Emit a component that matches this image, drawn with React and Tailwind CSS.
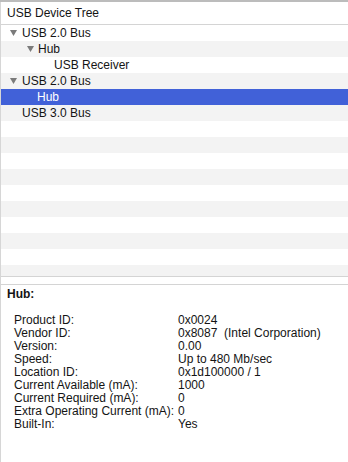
import React from 'react';

const Triangle = ({ className }) => (
  <svg width="7" height="6" viewBox="0 0 7 6" className={className}>
    <path d="M0 0 L7 0 L3.5 6 Z" fill="#7b7b7b" />
  </svg>
);

const treeRows = [
  { label: 'USB 2.0 Bus', pad: 'pl-[9px]', tri: 'mr-[5px]' },
  { label: 'Hub', pad: 'pl-[26px]', tri: 'mr-[4px]' },
  { label: 'USB Receiver', pad: 'pl-[53px]' },
  { label: 'USB 2.0 Bus', pad: 'pl-[9px]', tri: 'mr-[5px]' },
  { label: 'Hub', pad: 'pl-[36px]', selected: true },
  { label: 'USB 3.0 Bus', pad: 'pl-[21px]' },
];

const details = [
  ['Product ID:', '0x0024'],
  ['Vendor ID:', '0x8087  (Intel Corporation)'],
  ['Version:', '0.00'],
  ['Speed:', 'Up to 480 Mb/sec'],
  ['Location ID:', '0x1d100000 / 1'],
  ['Current Available (mA):', '1000'],
  ['Current Required (mA):', '0'],
  ['Extra Operating Current (mA):', '0'],
  ['Built-In:', 'Yes'],
];

export default function App() {
  const rows = Array.from({ length: 16 }, (_, i) => treeRows[i] || null);

  return (
    <div
      className="w-[348px] h-[462px] bg-white overflow-hidden text-[12px] text-[#141414] flex flex-col"
      style={{ fontFamily: '"Liberation Sans", Arial, sans-serif' }}
    >
      <div className="h-[2px] bg-[#bcbcbc] shrink-0" />
      <div className="flex-1 flex flex-col border-l border-[#d6d6d6] min-h-0">
        {/* tree header */}
        <div className="h-[23px] shrink-0 flex items-center pl-[6px] border-b border-[#d4d4d4]">
          USB Device Tree
        </div>

        {/* tree rows */}
        <div className="h-[251px] shrink-0 overflow-hidden">
          {rows.map((row, i) => (
            <div
              key={i}
              className={
                'h-4 flex items-center ' +
                (row && row.selected
                  ? 'bg-[#4161d8] text-white '
                  : i % 2 === 1
                  ? 'bg-[#f3f3f3] '
                  : 'bg-white ') +
                (row ? row.pad : '')
              }
            >
              {row && row.tri && <Triangle className={row.tri} />}
              {row && <span className="leading-4">{row.label}</span>}
            </div>
          ))}
        </div>

        {/* split divider */}
        <div className="h-[9px] shrink-0 border-y border-[#d4d4d4]" />

        {/* details */}
        <div className="pt-[3px] pl-[6px] leading-[13px]">
          <div className="font-bold">Hub:</div>
          <div className="h-[13px]" />
          <div className="pl-[7px]">
            {details.map(([k, v]) => (
              <div key={k} className="flex">
                <span className="w-[164px] shrink-0">{k}</span>
                <span className="whitespace-pre">{v}</span>
              </div>
            ))}
          </div>
        </div>
      </div>
    </div>
  );
}
